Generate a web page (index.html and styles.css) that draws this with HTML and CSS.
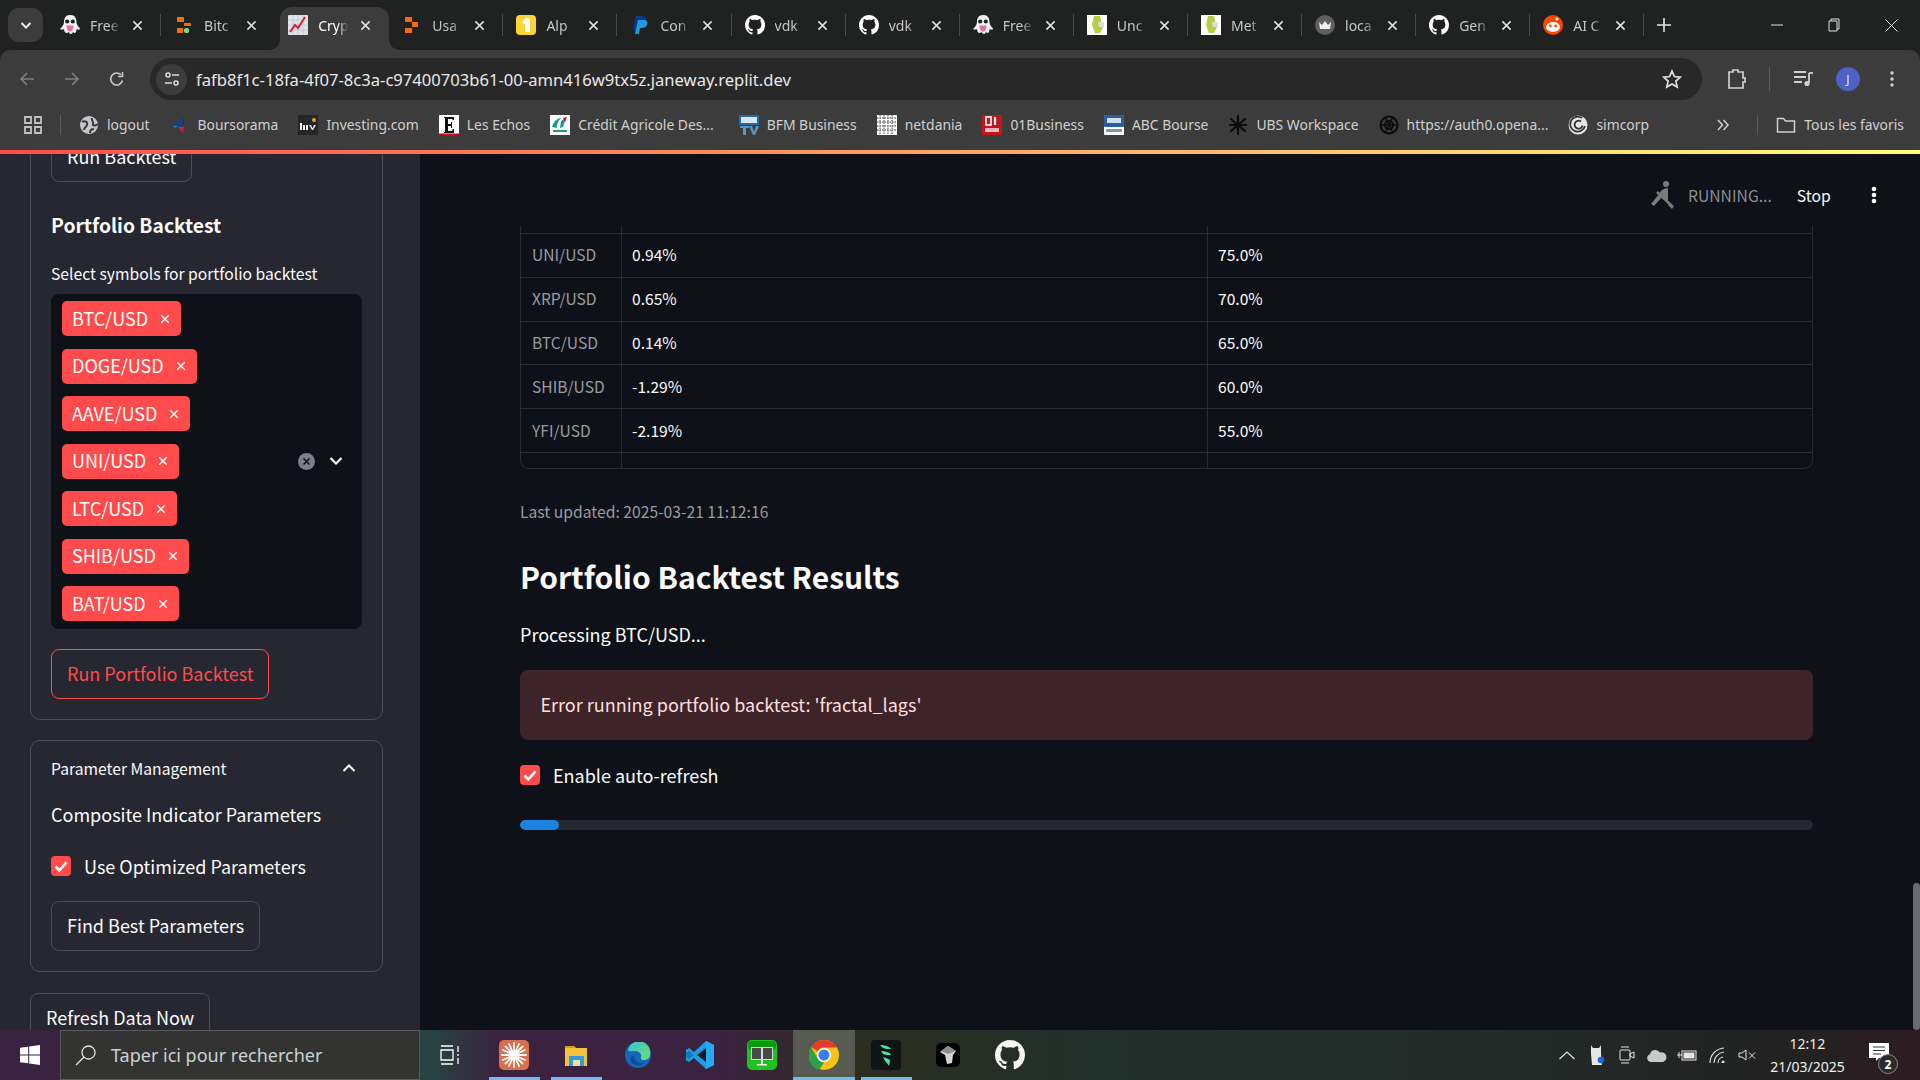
FILE: index.html
```html
<!DOCTYPE html>
<html lang="fr">
<head>
<meta charset="utf-8">
<title>Crypto Dashboard</title>
<link rel="stylesheet" href="styles.css">
</head>
<body>
<svg class="defs" width="0" height="0" aria-hidden="true">
  <symbol id="i-ghost" viewBox="0 0 20 20"><path d="M10 0C5.500 0 4 3.500 4 7c0 2.500-1.500 4.500-4 7 1.500 1 3 .5 4 0 0 2 1 4 2.500 4 .8 0 1.500-.5 2-1 .8 1 1.500 2 2.500 2s1.500-1 2-2c.6.6 1.200 1 1.800 1 1 0 1.700-2 1.700-4 1 .5 2.500 1 4 0-2.500-2.500-4-4.500-4-7 0-3.500-1.500-7-6-7z" fill="#f2f2f2"/><circle cx="7.200" cy="6.500" r="2.100" fill="#222"/><circle cx="12.800" cy="6.500" r="2.100" fill="#222"/><path d="M6.500 10.500h7c0 3.500-1.500 6-3.500 6s-3.500-2.500-3.500-6z" fill="#e6709b"/></symbol>
  <symbol id="i-bolt" viewBox="0 0 20 20"><rect x="3" y="2" width="7" height="5" fill="#f26b0f"/><rect x="3" y="13" width="6" height="5" fill="#f26b0f"/><rect x="10" y="8" width="7" height="3" fill="#f26b0f"/><circle cx="12.500" cy="15.500" r="2.600" fill="#7ddc8a"/></symbol>
  <symbol id="i-usage" viewBox="0 0 20 20"><rect x="3" y="2" width="7" height="5" fill="#f26b0f"/><rect x="3" y="13" width="7" height="5" fill="#f26b0f"/><path d="M10 7h6v5h-6z" fill="#f26b0f"/></symbol>
  <symbol id="i-chart" viewBox="0 0 20 20"><rect width="20" height="20" rx="1" fill="#dfe3ea"/><path d="M0 5h20M0 10h20M0 15h20M5 0v20M10 0v20M15 0v20" stroke="#b9c1cc" stroke-width=".6"/><path d="M2 17l5-7 3 3 7-11" fill="none" stroke="#d8232f" stroke-width="2"/></symbol>
  <symbol id="i-alpaca" viewBox="0 0 20 20"><rect width="20" height="20" rx="4" fill="#fcd535"/><path d="M11 3c2 0 3 1 3 2v12H9V9L6 8c1-3 3-5 5-5z" fill="#fff"/></symbol>
  <symbol id="i-paypal" viewBox="0 0 20 20"><path d="M6 1h6c4 0 5 3 4 6-1 3-3 4-6 4H8l-1 5H3z" fill="#0a3a8a"/><path d="M8 5h6c3 0 4 2 3 5-1 2-3 3-5 3h-2l-1 6H5z" fill="#1e9be0"/></symbol>
  <symbol id="i-gh" viewBox="0 0 16 16"><path fill="currentColor" d="M8 0C3.58 0 0 3.58 0 8c0 3.54 2.29 6.53 5.47 7.59.4.07.55-.17.55-.38 0-.19-.01-.82-.01-1.49-2.01.37-2.53-.49-2.69-.94-.09-.23-.48-.94-.82-1.13-.28-.15-.68-.52-.01-.53.63-.01 1.08.58 1.23.82.72 1.21 1.87.87 2.33.66.07-.52.28-.87.51-1.07-1.78-.2-3.64-.89-3.64-3.95 0-.87.31-1.59.82-2.15-.08-.2-.36-1.02.08-2.12 0 0 .67-.21 2.2.82.64-.18 1.32-.27 2-.27.68 0 1.36.09 2 .27 1.53-1.04 2.2-.82 2.2-.82.44 1.1.16 1.92.08 2.12.51.56.82 1.27.82 2.15 0 3.07-1.87 3.75-3.65 3.95.29.25.54.73.54 1.48 0 1.07-.01 1.93-.01 2.2 0 .21.15.46.55.38A8.013 8.013 0 0016 8c0-4.42-3.58-8-8-8z"/></symbol>
  <symbol id="i-leaf" viewBox="0 0 20 20"><rect width="20" height="20" fill="#fff"/><path d="M7 1h6l1 5 2 6-3 6H8L5 10z" fill="#b5cf3f"/><path d="M11 7h6v5h-5z" fill="#ddd"/></symbol>
  <symbol id="i-crown" viewBox="0 0 20 20"><circle cx="10" cy="10" r="10" fill="#5f5f5f"/><path d="M4 7l3 3 3-4 3 4 3-3-1 7H5z" fill="#eee"/></symbol>
  <symbol id="i-reddit" viewBox="0 0 20 20"><circle cx="10" cy="10" r="10" fill="#ff4500"/><ellipse cx="10" cy="12" rx="7" ry="5" fill="#fff"/><circle cx="7.300" cy="11" r="1.400" fill="#ff4500"/><circle cx="12.700" cy="11" r="1.400" fill="#ff4500"/><circle cx="14" cy="4" r="1.500" fill="#fff"/></symbol>
  <symbol id="i-x" viewBox="0 0 12 12"><path d="M1.500 1.500l9 9M10.500 1.500l-9 9" fill="none" stroke="currentColor" stroke-width="1.700"/></symbol>
  <symbol id="i-check" viewBox="0 0 20 20"><rect width="20" height="20" rx="4" fill="#ff4b4b"/><path d="M4.500 10.500l3.800 3.800 7.200-8" fill="none" stroke="#fff" stroke-width="2.600"/></symbol>
</svg>

<header class="tabstrip">
  <button class="tablist"><svg width="14" height="14" viewBox="0 0 14 14"><path d="M2.500 5l4.500 4.500L11.500 5" fill="none" stroke="#e8e8e8" stroke-width="2"/></svg></button>
  <div class="tabs">
    <div class="tab sep"><svg class="fav"><use href="#i-ghost"/></svg><span class="tab-title">Free</span><svg class="tab-x"><use href="#i-x"/></svg></div>
    <div class="tab"><svg class="fav"><use href="#i-bolt"/></svg><span class="tab-title">Bitc</span><svg class="tab-x"><use href="#i-x"/></svg></div>
    <div class="tab active"><svg class="fav"><use href="#i-chart"/></svg><span class="tab-title">Cryp</span><svg class="tab-x"><use href="#i-x"/></svg></div>
    <div class="tab sep"><svg class="fav"><use href="#i-usage"/></svg><span class="tab-title">Usa</span><svg class="tab-x"><use href="#i-x"/></svg></div>
    <div class="tab sep"><svg class="fav"><use href="#i-alpaca"/></svg><span class="tab-title">Alp</span><svg class="tab-x"><use href="#i-x"/></svg></div>
    <div class="tab sep"><svg class="fav"><use href="#i-paypal"/></svg><span class="tab-title">Con</span><svg class="tab-x"><use href="#i-x"/></svg></div>
    <div class="tab sep"><svg class="fav gh"><use href="#i-gh"/></svg><span class="tab-title">vdk</span><svg class="tab-x"><use href="#i-x"/></svg></div>
    <div class="tab sep"><svg class="fav gh"><use href="#i-gh"/></svg><span class="tab-title">vdk</span><svg class="tab-x"><use href="#i-x"/></svg></div>
    <div class="tab sep"><svg class="fav"><use href="#i-ghost"/></svg><span class="tab-title">Free</span><svg class="tab-x"><use href="#i-x"/></svg></div>
    <div class="tab sep"><svg class="fav"><use href="#i-leaf"/></svg><span class="tab-title">Unc</span><svg class="tab-x"><use href="#i-x"/></svg></div>
    <div class="tab sep"><svg class="fav"><use href="#i-leaf"/></svg><span class="tab-title">Met</span><svg class="tab-x"><use href="#i-x"/></svg></div>
    <div class="tab sep"><svg class="fav"><use href="#i-crown"/></svg><span class="tab-title">loca</span><svg class="tab-x"><use href="#i-x"/></svg></div>
    <div class="tab sep"><svg class="fav gh"><use href="#i-gh"/></svg><span class="tab-title">Gen</span><svg class="tab-x"><use href="#i-x"/></svg></div>
    <div class="tab sep"><svg class="fav"><use href="#i-reddit"/></svg><span class="tab-title">AI C</span><svg class="tab-x"><use href="#i-x"/></svg></div>
  </div>
  <svg class="newtab" width="14" height="14" viewBox="0 0 14 14"><path d="M7 0v14M0 7h14" stroke="#e6e6e6" stroke-width="1.600"/></svg>
  <div class="winctl">
    <svg width="12" height="12" viewBox="0 0 12 12"><path d="M0 6h12" stroke="#ddd" stroke-width="1"/></svg>
    <svg width="12" height="14" viewBox="0 0 12 14"><path d="M3 3V1h8v10H9M1 3h8v10H1z" fill="none" stroke="#ddd" stroke-width="1"/></svg>
    <svg width="13" height="13" viewBox="0 0 13 13"><path d="M.5.500l12 12M12.500.500l-12 12" stroke="#ddd" stroke-width="1"/></svg>
  </div>
</header>

<nav class="toolbar">
  <div class="nav-btns">
    <svg width="16" height="16" viewBox="0 0 16 16"><path d="M15 8H2M8 2L2 8l6 6" fill="none" stroke="#7e7e7e" stroke-width="1.600"/></svg>
    <svg width="16" height="16" viewBox="0 0 16 16"><path d="M1 8h13M8 2l6 6-6 6" fill="none" stroke="#7e7e7e" stroke-width="1.600"/></svg>
    <svg width="16" height="16" viewBox="0 0 16 16"><path d="M13.500 9.500A6 6 0 1 1 12 3.800" fill="none" stroke="#c7c7c7" stroke-width="1.600"/><path d="M13.500 1v4.500H9" fill="none" stroke="#c7c7c7" stroke-width="1.600"/></svg>
  </div>
  <div class="omnibox">
    <span class="siteinfo"><svg width="16" height="16" viewBox="0 0 16 16"><circle cx="4" cy="4" r="2" fill="none" stroke="#ddd" stroke-width="1.500"/><path d="M8 4h7M1 12h7" stroke="#ddd" stroke-width="1.500"/><circle cx="12" cy="12" r="2" fill="none" stroke="#ddd" stroke-width="1.500"/></svg></span>
    <span class="url">fafb8f1c-18fa-4f07-8c3a-c97400703b61-00-amn416w9tx5z.janeway.replit.dev</span>
    <svg class="star" width="20" height="20" viewBox="0 0 20 20"><path d="M10 2l2.400 5.500 6 .6-4.500 4 1.300 5.900L10 15l-5.200 3 1.300-5.900-4.500-4 6-.6z" fill="none" stroke="#e2e2e2" stroke-width="1.700"/></svg>
  </div>
  <div class="tool-right">
    <svg class="t-ext" width="20" height="22" viewBox="0 0 20 22"><path d="M7 4V2h5v2h5v6h2v4h-2v6H3V4z" fill="none" stroke="#d0d0d0" stroke-width="1.700"/></svg>
    <i class="divider"></i>
    <svg class="t-media" width="20" height="18" viewBox="0 0 20 18"><path d="M0 2h12M0 7h12M0 12h8" stroke="#d0d0d0" stroke-width="1.800"/><path d="M15 3v10" stroke="#d0d0d0" stroke-width="1.800"/><circle cx="13" cy="13.500" r="2.600" fill="#d0d0d0"/><path d="M15 3h4" stroke="#d0d0d0" stroke-width="1.800"/></svg>
    <span class="avatar">J</span>
    <svg class="t-menu" width="4" height="16" viewBox="0 0 4 16"><circle cx="2" cy="2" r="1.700" fill="#d0d0d0"/><circle cx="2" cy="8" r="1.700" fill="#d0d0d0"/><circle cx="2" cy="14" r="1.700" fill="#d0d0d0"/></svg>
  </div>
</nav>

<nav class="bookmarks">
  <svg class="apps" width="18" height="18" viewBox="0 0 18 18"><path d="M1 1h6v6H1zM11 1h6v6h-6zM1 11h6v6H1zM11 11h6v6h-6z" fill="none" stroke="#c2c2c2" stroke-width="1.800"/></svg>
  <i class="bm-sep"></i>
  <a class="bm"><svg class="bm-ic" viewBox="0 0 20 20"><circle cx="10" cy="10" r="9" fill="#c4c7cc"/><path d="M3 7c3-2 6 0 5 3s-3 2-3 5M13 3c-1 3 2 3 1 6s4 1 5 0M11 18c0-3 2-4 4-4" fill="none" stroke="#3c3c3c" stroke-width="2"/></svg>logout</a>
  <a class="bm"><svg class="bm-ic" viewBox="0 0 20 20"><path d="M14 2L3 11l7 .5z" fill="#0f3f9c"/><path d="M14 2l-2 8h2z" fill="#1c2f6f"/><path d="M8 12h6l-1 6z" fill="#d1156b"/><path d="M3 11l5 .5-3 1z" fill="#1aa5d8"/></svg>Boursorama</a>
  <a class="bm"><svg class="bm-ic" viewBox="0 0 20 20"><rect width="20" height="20" fill="#262626"/><path d="M2 8h2v7H2zM5 10h2v5H5zM8 10h2v5H8zM11 10h2l1.500 3.500L16 10h2l-3 5h-1z" fill="#eee"/><circle cx="16" cy="5" r="2" fill="#f5a623"/></svg>Investing.com</a>
  <a class="bm"><svg class="bm-ic" viewBox="0 0 20 20"><rect width="20" height="20" fill="#fff"/><path d="M5 2h10v3h-1l-1-1H9v5h3V7h1v6h-1v-2H9v5h4l1-2h1v4H5v-1h1V3H5z" fill="#111"/><rect y="18.500" width="20" height="1.500" fill="#d0021b"/></svg>Les Echos</a>
  <a class="bm bm-ca"><svg class="bm-ic" viewBox="0 0 20 20"><rect width="20" height="20" fill="#fff"/><path d="M2 12c2-7 7-9 9-9-3 3-5 8-4 10zM11 6l5-3-3 9-3 1z" fill="#1a9a8a"/><path d="M13 3l4-1-2 5z" fill="#e2001a"/><rect x="3" y="15" width="14" height="2" fill="#1a9a8a"/></svg>Crédit Agricole Des...</a>
  <a class="bm bm-bfm"><svg class="bm-ic" viewBox="0 0 20 20"><rect width="20" height="10" fill="#1d6ea8"/><path d="M2 2h16v6H2z" fill="#dbe7f0"/><path d="M1 11h9v2H7v7H4v-7H1zM10 11h3l2 6 2-6h3l-4 9h-2z" fill="#5f95bd"/></svg>BFM Business</a>
  <a class="bm"><svg class="bm-ic" viewBox="0 0 20 20"><rect width="20" height="20" fill="#fff"/><path d="M0 3h20M0 7h20M0 11h20M0 15h20M3 0v20M7 0v20M11 0v20M15 0v20" stroke="#777" stroke-width="1.400" stroke-dasharray="1.500 1"/></svg>netdania</a>
  <a class="bm"><svg class="bm-ic" viewBox="0 0 20 20"><rect width="20" height="20" fill="#c1141b"/><rect x="4" y="2" width="5" height="8" fill="none" stroke="#fff" stroke-width="1.600"/><path d="M13 2v8" stroke="#fff" stroke-width="2.200"/><path d="M3 13h14v4H3z" fill="#f2b8ba"/></svg>01Business</a>
  <a class="bm"><svg class="bm-ic" viewBox="0 0 20 20"><rect width="20" height="20" rx="1" fill="#fff"/><rect width="20" height="12" rx="1" fill="#2a5d9f"/><rect x="3" y="3" width="14" height="5" fill="#cfe0f2"/><rect x="2" y="14" width="16" height="3" fill="#7e97b5"/></svg>ABC Bourse</a>
  <a class="bm"><svg class="bm-ic" viewBox="0 0 20 20"><path d="M10 1v18M3 4l14 12M17 4L3 16M2 10h16" fill="none" stroke="#0c0c0c" stroke-width="2.200" stroke-linecap="round"/></svg>UBS Workspace</a>
  <a class="bm"><svg class="bm-ic" viewBox="0 0 20 20"><circle cx="10" cy="10" r="8.500" fill="none" stroke="#0c0c0c" stroke-width="2"/><circle cx="10" cy="10" r="4" fill="none" stroke="#0c0c0c" stroke-width="2"/><path d="M6 2l8 16M14 2L6 18M2 10h16" stroke="#0c0c0c" stroke-width="1.400"/></svg>https://auth0.opena...</a>
  <a class="bm"><svg class="bm-ic" viewBox="0 0 20 20"><circle cx="10" cy="10" r="9.500" fill="#e6e6e6"/><path d="M14 3a7.500 7.500 0 1 0 3 8M13 6.500a4 4 0 1 0 1.500 4" fill="none" stroke="#333" stroke-width="1.800"/></svg>simcorp</a>
  <span class="bm-right">
    <svg class="bm-more" width="12" height="12" viewBox="0 0 12 12"><path d="M1 1l4.500 5L1 11M6.500 1L11 6l-4.500 5" fill="none" stroke="#d0d0d0" stroke-width="1.500"/></svg>
    <i class="bm-sep"></i>
    <a class="bm bm-all"><svg class="bm-ic" viewBox="0 0 20 20"><path d="M1.500 3.500h6l2 2.500h9v11h-17z" fill="none" stroke="#d0d0d0" stroke-width="1.500"/></svg>Tous les favoris</a>
  </span>
</nav>

<div class="deco"></div>

<main class="app">
  <aside class="sidebar">
    <section class="card card-top">
      <button class="btn">Run Backtest</button>
      <h3 class="side-h">Portfolio Backtest</h3>
      <label class="side-label">Select symbols for portfolio backtest</label>
      <div class="mselect">
        <div class="tags">
          <span class="tag">BTC/USD<svg class="tag-x"><use href="#i-x"/></svg></span>
          <span class="tag">DOGE/USD<svg class="tag-x"><use href="#i-x"/></svg></span>
          <span class="tag">AAVE/USD<svg class="tag-x"><use href="#i-x"/></svg></span>
          <span class="tag">UNI/USD<svg class="tag-x"><use href="#i-x"/></svg></span>
          <span class="tag">LTC/USD<svg class="tag-x"><use href="#i-x"/></svg></span>
          <span class="tag">SHIB/USD<svg class="tag-x"><use href="#i-x"/></svg></span>
          <span class="tag">BAT/USD<svg class="tag-x"><use href="#i-x"/></svg></span>
        </div>
        <svg class="ms-clear" width="17" height="17" viewBox="0 0 17 17"><circle cx="8.500" cy="8.500" r="8.500" fill="#7d808c"/><path d="M5.500 5.500l6 6M11.500 5.500l-6 6" stroke="#0e1117" stroke-width="1.600"/></svg>
        <svg class="ms-chev" width="14" height="10" viewBox="0 0 14 10"><path d="M1.500 2l5.500 5.500L12.500 2" fill="none" stroke="#fafafa" stroke-width="2.200"/></svg>
      </div>
      <button class="btn btn-red">Run Portfolio Backtest</button>
    </section>

    <section class="card card-params">
      <div class="exp-head"><span class="exp-title">Parameter Management</span><svg width="14" height="10" viewBox="0 0 14 10"><path d="M1.500 8L7 2.500 12.500 8" fill="none" stroke="#fafafa" stroke-width="2"/></svg></div>
      <p class="comp-title">Composite Indicator Parameters</p>
      <label class="check side-check"><svg class="cb"><use href="#i-check"/></svg>Use Optimized Parameters</label>
      <button class="btn btn-find">Find Best Parameters</button>
    </section>

    <button class="btn btn-refresh">Refresh Data Now</button>
  </aside>

  <section class="content">
    <div class="st-header">
      <svg class="runner" width="24" height="32" viewBox="0 0 24 32"><circle cx="16" cy="5" r="3" fill="#7b7b7b"/><path d="M18 9v12h-4l-2-3-8 9-3-2 8-10 2-3c2-2 5-3 7-3z" fill="#7b7b7b"/><path d="M7 13l15 14" stroke="#7b7b7b" stroke-width="2.500"/><path d="M19 24l5 3-2 3-4-4z" fill="#7b7b7b"/></svg>
      <span class="running">RUNNING...</span>
      <span class="stop">Stop</span>
      <svg class="kebab" width="6" height="18" viewBox="0 0 6 18"><circle cx="3" cy="3" r="2.300" fill="#fafafa"/><circle cx="3" cy="9" r="2.300" fill="#fafafa"/><circle cx="3" cy="15" r="2.300" fill="#fafafa"/></svg>
    </div>

    <div class="grid">
      <div class="row row-stub"><span class="c1"></span><span class="c2"></span><span class="c3"></span></div>
      <div class="row"><span class="c1">UNI/USD</span><span class="c2">0.94%</span><span class="c3">75.0%</span></div>
      <div class="row"><span class="c1">XRP/USD</span><span class="c2">0.65%</span><span class="c3">70.0%</span></div>
      <div class="row"><span class="c1">BTC/USD</span><span class="c2">0.14%</span><span class="c3">65.0%</span></div>
      <div class="row"><span class="c1">SHIB/USD</span><span class="c2">-1.29%</span><span class="c3">60.0%</span></div>
      <div class="row"><span class="c1">YFI/USD</span><span class="c2">-2.19%</span><span class="c3">55.0%</span></div>
      <div class="row row-end"><span class="c1"></span><span class="c2"></span><span class="c3"></span></div>
    </div>

    <p class="updated">Last updated: 2025-03-21 11:12:16</p>
    <h2 class="results">Portfolio Backtest Results</h2>
    <p class="processing">Processing BTC/USD...</p>
    <div class="error">Error running portfolio backtest: 'fractal_lags'</div>
    <label class="check main-check"><svg class="cb"><use href="#i-check"/></svg>Enable auto-refresh</label>
    <div class="progress"><div class="progress-fill" style="width:3%"></div></div>
  </section>
  <div class="scrollthumb"></div>
</main>

<footer class="taskbar">
  <div class="start"><svg width="20" height="20" viewBox="0 0 20 20"><path d="M0 2.800l8.200-1.100v7.900H0zM9.200 1.500L20 0v9.600H9.200zM0 10.400h8.200v7.900L0 17.200zM9.200 10.400H20V20L9.200 18.500z" fill="#fff"/></svg></div>
  <div class="search"><svg width="22" height="22" viewBox="0 0 22 22"><circle cx="13.500" cy="8.500" r="6.500" fill="none" stroke="#e6e6e6" stroke-width="1.300"/><path d="M9 13l-8 8" stroke="#e6e6e6" stroke-width="1.300"/></svg><span>Taper ici pour rechercher</span></div>
  <div class="taskview"><svg width="24" height="20" viewBox="0 0 24 20"><path d="M1 1h12M1 19h12M1 5h12v10H1zM18 1v6M18 9v2M18 13v6" fill="none" stroke="#fff" stroke-width="1.300"/></svg></div>
  <div class="slot open"><svg width="30" height="30" viewBox="0 0 30 30"><rect width="30" height="30" rx="5" fill="#d9704d"/><path d="M15 3v24M3 15h24M6.500 6.500l17 17M23.500 6.500l-17 17M10 4l10 22M20 4L10 26M4 10l22 10M26 10L4 20" stroke="#fff" stroke-width="1.800" stroke-linecap="round"/><circle cx="15" cy="15" r="3" fill="#fff"/></svg></div>
  <div class="slot open"><svg width="24" height="24" viewBox="0 0 24 24"><path d="M1 3h9l2 2h11v18H1z" fill="#f5c33b"/><path d="M1 3h9l2 2H1z" fill="#d99a13"/><rect x="5" y="13" width="15" height="10" fill="#2f9be0"/><rect x="9" y="17" width="7" height="6" fill="#f8e08e"/></svg></div>
  <div class="slot"><svg width="26" height="26" viewBox="0 0 26 26"><defs><linearGradient id="ed" x1="0" y1="0" x2="1" y2="1"><stop offset="0" stop-color="#37c4d6"/><stop offset="1" stop-color="#6fdc6f"/></linearGradient></defs><circle cx="13" cy="13" r="13" fill="#1468b8"/><path d="M3 8a11 11 0 0 1 22 5c0 3-3 5-6 5-4 0-3-2-3-3 1-3-2-6-6-6-3 0-6 1-7-1z" fill="url(#ed)"/><path d="M9 14c0 4 3 7 7 7 3 0 5-1 6-3-3 6-11 7-15 3-3-3-2-7 2-7z" fill="#0d4c96"/></svg></div>
  <div class="slot"><svg width="30" height="30" viewBox="0 0 30 30"><path d="M21 1l8 4v20l-8 4-12-11-5 4-3-2v-10l3-2 5 4z" fill="#1a9ee8"/><path d="M21 8L12 15l9 7z" fill="#0e1d2c"/><path d="M21 1l8 4v20l-8 4z" fill="#29a9f2"/><path d="M4 11l5 4-5 4-3-2v-4z" fill="#0e78bf"/></svg></div>
  <div class="slot"><svg width="30" height="30" viewBox="0 0 30 30"><rect width="30" height="30" rx="5" fill="#1fc31f"/><rect x="1" y="1" width="28" height="9" rx="4" fill="#0a9a0a"/><path d="M4 7h22v13H4z" fill="#d7dedb"/><path d="M5 8h9v11H5zM16 8h9v11h-9z" fill="#4a4a4a"/><rect x="14" y="20" width="2" height="4" fill="#eee"/><rect x="10" y="24" width="10" height="1.500" fill="#eee"/></svg></div>
  <div class="slot open active"><svg width="30" height="30" viewBox="0 0 30 30"><circle cx="15" cy="15" r="15" fill="#fbc116"/><path d="M15 0a15 15 0 0 1 13 7.500H15a7.500 7.500 0 0 0-6.500 3.800L2 7A15 15 0 0 1 15 0z" fill="#e33b2e"/><path d="M2 7l6.500 11.300A7.500 7.500 0 0 0 15 22.500L10 30A15 15 0 0 1 2 7z" fill="#2e9f4b"/><circle cx="15" cy="15" r="7" fill="#fff"/><circle cx="15" cy="15" r="5.500" fill="#3a7de8"/></svg></div>
  <div class="slot open"><svg width="30" height="30" viewBox="0 0 30 30"><rect width="30" height="30" rx="4" fill="#0e1514"/><path d="M9 5c4 0 9 1 11 4-3 0-6 0-8-1zM10 11c4 0 9 1 10 4-3 0-6 0-8-1zM12 17c3 1 7 2 7 4l-1 5c-2-3-5-6-6-9z" fill="#4be0ae"/></svg></div>
  <div class="slot"><svg width="24" height="24" viewBox="0 0 24 24"><rect width="24" height="24" rx="5" fill="#000"/><path d="M12 3l8 5-3 4-1 8-5 1-2-9-5-3z" fill="#d5d5d5"/><path d="M12 3l8 5-8 3-7-3z" fill="#8d8d8d"/></svg></div>
  <div class="slot"><svg class="tb-gh" width="30" height="30"><use href="#i-gh"/></svg></div>

  <div class="tray">
    <svg class="tr" width="16" height="9" viewBox="0 0 16 9"><path d="M.500 8L8 1l7.500 7" fill="none" stroke="#e6e6e6" stroke-width="1.200"/></svg>
    <svg class="tr" width="16" height="20" viewBox="0 0 16 20"><path d="M2 0l2 3h6l2-3v9l1 11H3L2 9z" fill="#e8e8e8"/><circle cx="12" cy="15" r="3.300" fill="#1a66e8"/></svg>
    <svg class="tr" width="16" height="20" viewBox="0 0 16 20"><rect x="1" y="5" width="10" height="10" rx="1" fill="none" stroke="#e6e6e6"/><path d="M11 9l4-2v6l-4-2zM2 2h8M2 18h8" fill="none" stroke="#e6e6e6"/></svg>
    <svg class="tr" width="20" height="13" viewBox="0 0 20 13"><path d="M4 13a4 4 0 0 1-1-7.800A5.500 5.500 0 0 1 13 3.500a4.500 4.500 0 0 1 3 9.500z" fill="#c9c9c9"/></svg>
    <svg class="tr" width="20" height="12" viewBox="0 0 20 12"><rect x="5" y="2" width="14" height="9" fill="none" stroke="#e6e6e6"/><rect x="6.500" y="3.500" width="11" height="6" fill="#e6e6e6"/><path d="M0 6h5M2 3v6" stroke="#e6e6e6"/></svg>
    <svg class="tr" width="16" height="16" viewBox="0 0 16 16"><path d="M1 16A15 15 0 0 1 15 1M5 16A11 11 0 0 1 15 5M9 16a6 6 0 0 1 5-6" fill="none" stroke="#e6e6e6" stroke-width="1.100"/><circle cx="14" cy="15" r="1.500" fill="#e6e6e6"/></svg>
    <svg class="tr" width="18" height="12" viewBox="0 0 18 12"><path d="M1 4h3l4-3v10L4 8H1z" fill="none" stroke="#e6e6e6"/><path d="M11 3.500l6 6M17 3.500l-6 6" stroke="#e6e6e6"/></svg>
  </div>
  <div class="clock"><span>12:12</span><span>21/03/2025</span></div>
  <div class="notif"><svg width="20" height="18" viewBox="0 0 20 18"><path d="M0 0h20v15H10l-3 3v-3H0z" fill="#fff"/><path d="M4 4h12M4 7.500h12M4 11h8" stroke="#333" stroke-width="1"/></svg><span class="notif-badge">2</span></div>
</footer>
</body>
</html>
```

FILE: styles.css
```css
* { box-sizing: border-box; }
html, body { margin: 0; padding: 0; }
body {
  width: 1920px; height: 1080px; overflow: hidden;
  display: flex; flex-direction: column;
  background: #202222;
  font-family: "Noto Sans", "Open Sans", sans-serif;
}
.defs { position: absolute; }
button { font: inherit; }
p, h2, h3 { margin: 0; font-weight: 400; }

/* tab strip */
.tabstrip { height: 50px; flex: none; display: flex; align-items: center; background: #202222; position: relative; padding-left: 8px; }
.tablist { width: 35px; height: 34px; border: 0; border-radius: 11px; background: #3c3c3c; display: flex; align-items: center; justify-content: center; padding: 0; }
.tabs { display: flex; margin-left: 4px; height: 50px; }
.tab { width: 114.1px; height: 50px; flex: none; display: flex; align-items: center; padding: 0 0 0 13px; position: relative; color: #c7c7c7; }
.tab.sep::after { content: ""; position: absolute; right: 0; top: 14px; height: 22px; width: 1px; background: #4a4b4b; }
.tab.active { color: #fff; z-index: 0; }
.tab.active::before { content: ""; position: absolute; left: 5px; right: 0; top: 7px; bottom: 0; background: #3c3c3c; border-radius: 12px 12px 0 0; z-index: -1; }
.tab.active::after { content: ""; position: absolute; left: -5px; right: -10px; bottom: 0; height: 10px; z-index: -1;
  background:
    radial-gradient(circle at 0 0, transparent 9.500px, #3c3c3c 10px) 0 0 / 10px 10px no-repeat,
    radial-gradient(circle at 100% 0, transparent 9.500px, #3c3c3c 10px) 100% 0 / 10px 10px no-repeat; }
.fav { width: 20px; height: 20px; flex: none; }
.fav.gh { color: #fff; }
.tab-title { width: 34px; margin-left: 10px; font-size: 14px; white-space: nowrap; overflow: hidden; flex: none;
  -webkit-mask-image: linear-gradient(90deg, #000 55%, transparent 90%); mask-image: linear-gradient(90deg, #000 55%, transparent 90%); }
.tab-x { width: 11px; height: 11px; margin-left: 8px; flex: none; color: #e0e0e0; }
.newtab { margin-left: 13px; flex: none; }
.winctl { margin-left: auto; width: 175px; display: flex; align-items: center; justify-content: space-between; padding: 0 22px 0 26px; }

/* toolbar */
.toolbar { height: 50px; flex: none; background: #3c3c3c; border-radius: 10px 10px 0 0; display: flex; align-items: center; padding: 8px 0 0 19px; }
.nav-btns { width: 131px; display: flex; align-items: center; gap: 29px; flex: none; }
.omnibox { width: 1552px; height: 42px; background: #282828; border-radius: 21px; display: flex; align-items: center; padding: 0 20px 0 6px; flex: none; }
.siteinfo { width: 31px; height: 31px; border-radius: 50%; background: #3c3c3c; display: flex; align-items: center; justify-content: center; flex: none; }
.url { margin-left: 9px; font-size: 16.600px; color: #e8e8e8; white-space: nowrap; }
.star { margin-left: auto; }
.tool-right { flex: 1; display: flex; align-items: center; padding-left: 24px; }
.divider { width: 1px; height: 24px; background: #5c5c5c; margin: 0 24px 0 23px; }
.avatar { width: 24px; height: 24px; margin-left: 22px; border-radius: 50%; background: #4d62c4; color: #e8e8f8; font-size: 12px; display: flex; align-items: center; justify-content: center; }
.t-menu { margin-left: 30px; }

/* bookmarks */
.bookmarks { height: 50px; flex: none; background: #3c3c3c; display: flex; align-items: center; padding: 0 0 1px 24px; gap: 20px; font-size: 13.900px; color: #d0d0d0; white-space: nowrap; }
.apps { margin-right: -2px; }
.bm-sep { width: 1px; height: 20px; background: #5c5c5c; flex: none; margin-right: -2px; }
.bm { display: flex; align-items: center; gap: 8px; }
.bm-bfm { margin-left: 5px; }
.bm-ic { width: 20px; height: 20px; flex: none; }
.bm-right { margin-left: auto; display: flex; align-items: center; padding-right: 16px; }
.bm-more { margin-right: 28px; }
.bm-all { margin-left: 20px; }

.deco { height: 4px; flex: none; background: linear-gradient(90deg, #ff4b4b, #fffd80); }

/* app */
.app { flex: 1; min-height: 0; display: flex; background: #0e1117; position: relative; overflow: hidden; color: #fafafa;
  font-family: "Noto Sans CJK SC", "Noto Sans", sans-serif; font-size: 18px; }
.sidebar { width: 420px; flex: none; background: #262730; padding-left: 30px; overflow: hidden; display: flex; flex-direction: column; align-items: flex-start; }
.card { width: 353px; border: 1px solid #4c4d55; border-radius: 10px; padding: 0 19px 0 20px; }
.card-top { margin-top: -30px; padding-top: 7px; padding-bottom: 20px; }
.btn { display: block; height: 50px; padding: 0 15px 2px; border: 1px solid #4c4d55; border-radius: 8px; background: #262730; color: #fafafa; font-size: 18px; line-height: 1; white-space: nowrap; }
.side-h { margin-top: 28px; font-size: 19.300px; font-weight: 700; line-height: 30px; }
.side-label { display: block; margin-top: 21px; font-size: 15.700px; line-height: 26px; }
.mselect { margin-top: 7px; width: 311px; background: #0e1117; border-radius: 8px; padding: 7px 0 8px 11px; display: flex; align-items: center; }
.tags { flex: 1; display: flex; flex-direction: column; align-items: flex-start; gap: 12.500px; }
.tag { height: 35px; display: flex; align-items: center; padding: 0 11px 2px 10px; background: #ff4b4b; border-radius: 5px; font-size: 18px; color: #fff; }
.tag-x { width: 10px; height: 10px; margin: 2px 0 0 12px; color: #fff; }
.ms-clear { margin-right: 14.500px; }
.ms-chev { margin-right: 19px; }
.btn-red { margin-top: 20px; border-color: #ff4b4b; color: #ff4b4b; }
.card-params { margin-top: 20px; padding-bottom: 20px; }
.exp-head { height: 54px; display: flex; align-items: center; justify-content: space-between; padding-right: 7px; }
.exp-title { font-size: 15.700px; }
.comp-title { margin-top: 4px; font-size: 18px; line-height: 30px; }
.check { display: flex; align-items: center; gap: 13px; font-size: 18px; }
.cb { width: 20px; height: 20px; flex: none; }
.side-check { margin-top: 27px; height: 20px; }
.btn-find { margin-top: 25px; }
.btn-refresh { margin-top: 21px; flex: none; }

/* main */
.content { flex: 1; padding: 72px 107px 0 100px; min-width: 0; }
.st-header { position: absolute; top: 0; left: 420px; right: 0; height: 72px; display: flex; align-items: center; padding: 10px 0 0 1230px; background: #0e1117; }
.runner { margin-right: 14px; flex: none; }
.running { font-size: 15.700px; color: #8b8f98; }
.stop { margin-left: 25px; font-size: 15.700px; color: #fafafa; }
.kebab { margin-left: 40px; }
.grid { height: 243px; border: 1px solid #282b31; border-top: 0; border-radius: 0 0 9px 9px; overflow: hidden; font-size: 15.600px; }
.row { display: flex; height: 43.800px; border-top: 1px solid #282b31; }
.row-stub { height: 7px; border-top: 0; }
.row-end { height: 16px; }
.row span { display: flex; align-items: center; padding: 0 0 2px 10px; border-right: 1px solid #282b31; }
.row .c1 { width: 101px; flex: none; padding-left: 11px; color: #999ca3; }
.c2 { width: 586px; flex: none; }
.c3 { flex: 1; border-right: 0 !important; }
.updated { margin-top: 29px; font-size: 15.700px; line-height: 28px; color: #999ca3; }
.results { margin-top: 25px; font-size: 30px; font-weight: 700; line-height: 50px; }
.processing { margin-top: 17px; font-size: 18px; line-height: 32px; }
.error { margin-top: 20px; height: 70px; padding: 0 0 2px 20.500px; display: flex; align-items: center; background: #3e2428; border-radius: 8px; color: #ffdede; font-size: 18px; }
.main-check { margin-top: 25px; height: 20px; }
.progress { margin-top: 35px; height: 10px; border-radius: 5px; background: #262730; overflow: hidden; }
.progress-fill { height: 100%; background: #1c83e1; border-radius: 5px; }
.scrollthumb { position: absolute; right: 0; top: 729px; bottom: 0; width: 7px; background: #6a6b72; border-radius: 4px; }

/* taskbar */
.taskbar { height: 50px; flex: none; display: flex; align-items: stretch; color: #fff;
  background: linear-gradient(90deg, #3a2340 0, #3a2340 60px, #274340 430px, #3a2240 500px, #3b2240 720px, #2b2d20 850px, #1f2f2a 1100px, #232a27 1500px, #222 1800px, #2e1c22 1920px); }
.start { width: 60px; display: flex; align-items: center; justify-content: center; flex: none; }
.search { width: 360px; flex: none; background: #333432; border: 1px solid #5a5b59; display: flex; align-items: center; padding-left: 14px; gap: 14px; font-size: 18px; color: #c9d2d6; }
.taskview { width: 63px; flex: none; display: flex; align-items: center; padding-left: 20px; }
.slot { width: 62px; flex: none; display: flex; align-items: center; justify-content: center; }
.slot.open { background: linear-gradient(#76b9ed, #76b9ed) center bottom / 51px 3px no-repeat; }
.slot.active { background: linear-gradient(#76b9ed, #76b9ed) center bottom / 100% 3px no-repeat, #565a50; }
.tb-gh { color: #f6f6f6; }
.tray { margin-left: auto; display: flex; align-items: center; gap: 0; }
.tr { width: 30px; flex: none; }
.clock { width: 85px; margin-left: 3px; display: flex; flex-direction: column; align-items: center; justify-content: center; font-size: 14px; line-height: 23px; color: #eee; }
.notif { width: 70px; position: relative; display: flex; align-items: center; padding-left: 19px; padding-bottom: 6px; }
.notif-badge { position: absolute; left: 28px; top: 24px; width: 20px; height: 20px; border-radius: 50%; background: #2a2a2a; border: 1px solid #888; font-size: 12px; font-weight: 700; display: flex; align-items: center; justify-content: center; }
```
